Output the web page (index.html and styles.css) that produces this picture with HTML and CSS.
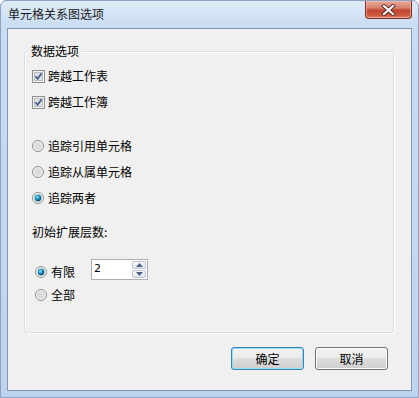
FILE: index.html
```html
<!DOCTYPE html>
<html lang="zh-CN">
<head>
    <meta charset="UTF-8">
    <title>单元格关系图选项</title>
    <link rel="stylesheet" href="styles.css">
</head>
<body>
    <div class="window">
        <div class="titlebar">
            <span class="title">单元格关系图选项</span>
            <button class="close" type="button" aria-label="关闭">
                <svg width="15" height="12" viewBox="0 0 15 12">
                    <path d="M3 2 L12 10 M12 2 L3 10" stroke="#5a2a24" stroke-width="4" stroke-linecap="square"/>
                    <path d="M3 2 L12 10 M12 2 L3 10" stroke="#ffffff" stroke-width="2.2" stroke-linecap="square"/>
                </svg>
            </button>
        </div>

        <div class="client">
            <div class="group">
                <span class="legend">数据选项</span>

                <div class="section checks">
                    <label class="opt">
                        <svg class="check" width="13" height="13" viewBox="0 0 13 13">
                            <rect x="0.5" y="0.5" width="12" height="12" fill="#f4f4f4" stroke="#8e8f8f"/>
                            <rect x="2.5" y="2.5" width="8" height="8" fill="#dfe2e6" stroke="#b7bcc3"/>
                            <path d="M3.5 6.2 L5.6 8.8 L9.6 3.4" fill="none" stroke="#4b5f8e" stroke-width="1.8"/>
                        </svg>
                        <span>跨越工作表</span>
                    </label>
                    <label class="opt">
                        <svg class="check" width="13" height="13" viewBox="0 0 13 13">
                            <rect x="0.5" y="0.5" width="12" height="12" fill="#f4f4f4" stroke="#8e8f8f"/>
                            <rect x="2.5" y="2.5" width="8" height="8" fill="#dfe2e6" stroke="#b7bcc3"/>
                            <path d="M3.5 6.2 L5.6 8.8 L9.6 3.4" fill="none" stroke="#4b5f8e" stroke-width="1.8"/>
                        </svg>
                        <span>跨越工作簿</span>
                    </label>
                </div>

                <div class="section radios">
                    <label class="opt">
                        <svg class="radio" width="12" height="12" viewBox="0 0 12 12">
                            <circle cx="6" cy="6" r="5.5" fill="#f2f2f2" stroke="#8e8f8f"/>
                            <circle cx="6" cy="6" r="3.8" fill="#dcdcdc"/>
                        </svg>
                        <span>追踪引用单元格</span>
                    </label>
                    <label class="opt">
                        <svg class="radio" width="12" height="12" viewBox="0 0 12 12">
                            <circle cx="6" cy="6" r="5.5" fill="#f2f2f2" stroke="#8e8f8f"/>
                            <circle cx="6" cy="6" r="3.8" fill="#dcdcdc"/>
                        </svg>
                        <span>追踪从属单元格</span>
                    </label>
                    <label class="opt">
                        <svg class="radio" width="12" height="12" viewBox="0 0 12 12">
                            <defs>
                                <radialGradient id="dot1" cx="0.4" cy="0.35" r="0.7">
                                    <stop offset="0" stop-color="#8fe3f8"/>
                                    <stop offset="0.5" stop-color="#1b8cb8"/>
                                    <stop offset="1" stop-color="#0a3f5f"/>
                                </radialGradient>
                            </defs>
                            <circle cx="6" cy="6" r="5.5" fill="#f2f2f2" stroke="#8e8f8f"/>
                            <circle cx="6" cy="6" r="3.4" fill="url(#dot1)"/>
                        </svg>
                        <span>追踪两者</span>
                    </label>
                </div>

                <div class="caption">初始扩展层数:</div>

                <div class="limit-row">
                    <label class="opt limit-opt">
                        <svg class="radio" width="12" height="12" viewBox="0 0 12 12">
                            <defs>
                                <radialGradient id="dot2" cx="0.4" cy="0.35" r="0.7">
                                    <stop offset="0" stop-color="#8fe3f8"/>
                                    <stop offset="0.5" stop-color="#1b8cb8"/>
                                    <stop offset="1" stop-color="#0a3f5f"/>
                                </radialGradient>
                            </defs>
                            <circle cx="6" cy="6" r="5.5" fill="#f2f2f2" stroke="#8e8f8f"/>
                            <circle cx="6" cy="6" r="3.4" fill="url(#dot2)"/>
                        </svg>
                        <span>有限</span>
                    </label>
                    <div class="spin">
                        <span class="spin-value">2</span>
                        <div class="spin-btns">
                            <span class="spin-btn">
                                <svg width="7" height="4" viewBox="0 0 7 4"><path d="M0 4 L3.5 0 L7 4 Z" fill="#4d6185"/></svg>
                            </span>
                            <span class="spin-btn">
                                <svg width="7" height="4" viewBox="0 0 7 4"><path d="M0 0 L3.5 4 L7 0 Z" fill="#4d6185"/></svg>
                            </span>
                        </div>
                    </div>
                </div>

                <label class="opt all-opt">
                    <svg class="radio" width="12" height="12" viewBox="0 0 12 12">
                        <circle cx="6" cy="6" r="5.5" fill="#f2f2f2" stroke="#8e8f8f"/>
                        <circle cx="6" cy="6" r="3.8" fill="#dcdcdc"/>
                    </svg>
                    <span>全部</span>
                </label>
            </div>

            <div class="buttons">
                <button type="button" class="btn btn-default">确定</button>
                <button type="button" class="btn">取消</button>
            </div>
        </div>
    </div>
</body>
</html>
```

FILE: styles.css
```css
* {
    margin: 0;
    padding: 0;
    box-sizing: border-box;
}

body {
    font-family: "Noto Sans CJK SC", "Noto Sans", sans-serif;
    font-size: 12px;
    line-height: 16px;
    color: #000;
    background: #ffffff;
}

.window {
    width: 419px;
    height: 398px;
    padding: 0 6px 6px 6px;
    border: 1px solid #8aa3c2;
    border-radius: 6px 6px 0 0;
    background: linear-gradient(to bottom, #dfeaf7 0, #c8dcf3 27px, #bed4ee 100%);
}

.titlebar {
    height: 27px;
    display: flex;
    align-items: flex-start;
}

.title {
    margin: 5px 0 0 1px;
    color: #1a1a1a;
}

.close {
    margin-left: auto;
    width: 47px;
    height: 18px;
    border: 1px solid #7d3027;
    border-top: none;
    border-radius: 0 0 4px 4px;
    background: linear-gradient(to bottom, #e8a899 0, #d8826f 40%, #c24530 55%, #cc5a40 85%, #e08a6e 100%);
    display: flex;
    align-items: center;
    justify-content: center;
    box-shadow: inset 0 0 0 1px rgba(255, 200, 190, 0.5);
}

.client {
    height: 363px;
    border: 1px solid #8497ad;
    background: #f0f0f0;
    padding: 22px 0 0 16px;
    display: flex;
    flex-direction: column;
}

.group {
    position: relative;
    width: 370px;
    height: 282px;
    border: 1px solid #d5dfe5;
    border-radius: 3px;
    box-shadow: inset 1px 1px 0 #ffffff, 1px 1px 0 #ffffff;
    padding: 16px 0 0 7px;
    display: flex;
    flex-direction: column;
}

.legend {
    position: absolute;
    top: -9px;
    left: 4px;
    padding: 0 2px;
    background: #f0f0f0;
}

.section {
    display: flex;
    flex-direction: column;
    gap: 10px;
}

.radios {
    margin-top: 28px;
}

.opt {
    height: 16px;
    display: flex;
    align-items: center;
    gap: 3px;
}

.opt .radio {
    margin-right: 1px;
}

.caption {
    margin-top: 18px;
    height: 16px;
}

.limit-row {
    margin-top: 19px;
    display: flex;
    align-items: flex-start;
}

.limit-opt {
    width: 56px;
    margin: 5px 0 0 3px;
}

.all-opt {
    margin: 7px 0 0 3px;
}

.spin {
    width: 57px;
    height: 21px;
    border: 1px solid #abadb3;
    background: #ffffff;
    display: flex;
    justify-content: space-between;
}

.spin-value {
    font-family: "DejaVu Sans", "Liberation Sans", sans-serif;
    font-size: 11px;
    line-height: 14px;
    padding: 2px 0 0 2px;
}

.spin-btns {
    width: 15px;
    padding: 1px 1px 1px 0;
    display: flex;
    flex-direction: column;
    gap: 1px;
}

.spin-btn {
    flex: 1;
    border: 1px solid #b9c2cd;
    border-radius: 2px;
    background: linear-gradient(to bottom, #f7f8fa, #e3e7ec);
    display: flex;
    align-items: center;
    justify-content: center;
}

.buttons {
    margin-top: 14px;
    padding-right: 23px;
    display: flex;
    justify-content: flex-end;
    gap: 11px;
}

.btn {
    width: 73px;
    height: 23px;
    font-family: inherit;
    font-size: 12px;
    color: #000;
    border: 1px solid #707070;
    border-radius: 3px;
    background: linear-gradient(to bottom, #f2f2f2 0, #ebebeb 50%, #dddddd 50%, #cfcfcf 100%);
    box-shadow: inset 0 0 0 1px #fcfcfc;
}

.btn-default {
    border-color: #3c7fb1;
    box-shadow: inset 0 0 0 1px #8ee0fb;
}
```
